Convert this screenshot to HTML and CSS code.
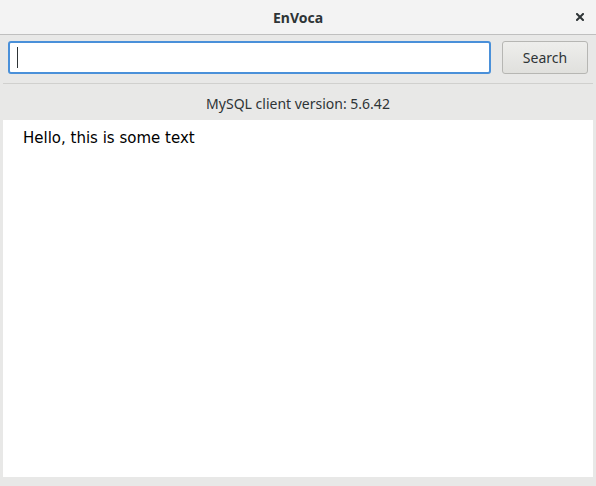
FILE: index.html
```html
<!DOCTYPE html>
<html>
<head>
<meta charset="utf-8">
<link rel="stylesheet" href="styles.css">
</head>
<body>
<div class="window">
  <header class="titlebar">
    <span class="title">EnVoca</span>
    <span class="close" aria-label="Close">
      <svg width="8" height="8" viewBox="0 0 8 8"><path d="M1 1L7 7M7 1L1 7" stroke="#2e3436" stroke-width="2" stroke-linecap="square"/></svg>
    </span>
  </header>
  <div class="toolbar">
    <div class="entry"><span class="caret"></span></div>
    <button class="btn">Search</button>
  </div>
  <div class="sep"></div>
  <div class="status">MySQL client version: 5.6.42</div>
  <div class="content">
    <p class="text">Hello, this is some text</p>
  </div>
</div>
</body>
</html>
```
FILE: styles.css
```css
html, body {
  margin: 0;
  padding: 0;
}
body {
  width: 596px;
  height: 486px;
  overflow: hidden;
  background: #e8e8e7;
  font-family: "Noto Sans", "DejaVu Sans", sans-serif;
}
.window {
  width: 596px;
  height: 486px;
  display: flex;
  flex-direction: column;
  background: #e8e8e7;
}
.titlebar {
  height: 34px;
  flex: none;
  background: #f3f3f3;
  border-bottom: 1px solid #bfbfbf;
  position: relative;
  display: flex;
  align-items: center;
  justify-content: center;
}
.title {
  font-weight: bold;
  font-size: 14px;
  color: #2e3436;
  line-height: 1;
  padding-top: 1px;
}
.close {
  position: absolute;
  left: 576px;
  top: 13px;
  width: 8px;
  height: 8px;
  display: block;
}
.close svg { display: block; }
.toolbar {
  display: flex;
  gap: 11px;
  padding: 6px 8px 0 8px;
  height: 33px;
}
.entry {
  width: 479px;
  height: 29px;
  border: 2px solid #4a90d9;
  border-radius: 3px;
  background: #fff;
  position: relative;
}
.caret {
  position: absolute;
  left: 7px;
  top: 4px;
  width: 1px;
  height: 21px;
  background: #2e3436;
}
.btn {
  width: 86px;
  height: 33px;
  margin: 0;
  padding: 0;
  border: 1px solid #b6b6b3;
  border-radius: 3px;
  background: linear-gradient(#eeeeec, #e0e0dd);
  font-family: "Noto Sans", "DejaVu Sans", sans-serif;
  font-size: 14px;
  color: #2e3436;
}
.sep {
  height: 1px;
  margin: 9px 3px 0 3px;
  background: #d0d0ce;
}
.status {
  height: 36px;
  box-sizing: border-box;
  padding-top: 3px;
  text-align: center;
  font-size: 14px;
  line-height: 33px;
  color: #2e3436;
}
.content {
  margin: 0 3px;
  height: 357px;
  background: #fff;
}
.text {
  margin: 0;
  padding: 9px 0 0 20px;
  font-family: "DejaVu Sans", sans-serif;
  font-size: 15px;
  color: #000;
}
```
